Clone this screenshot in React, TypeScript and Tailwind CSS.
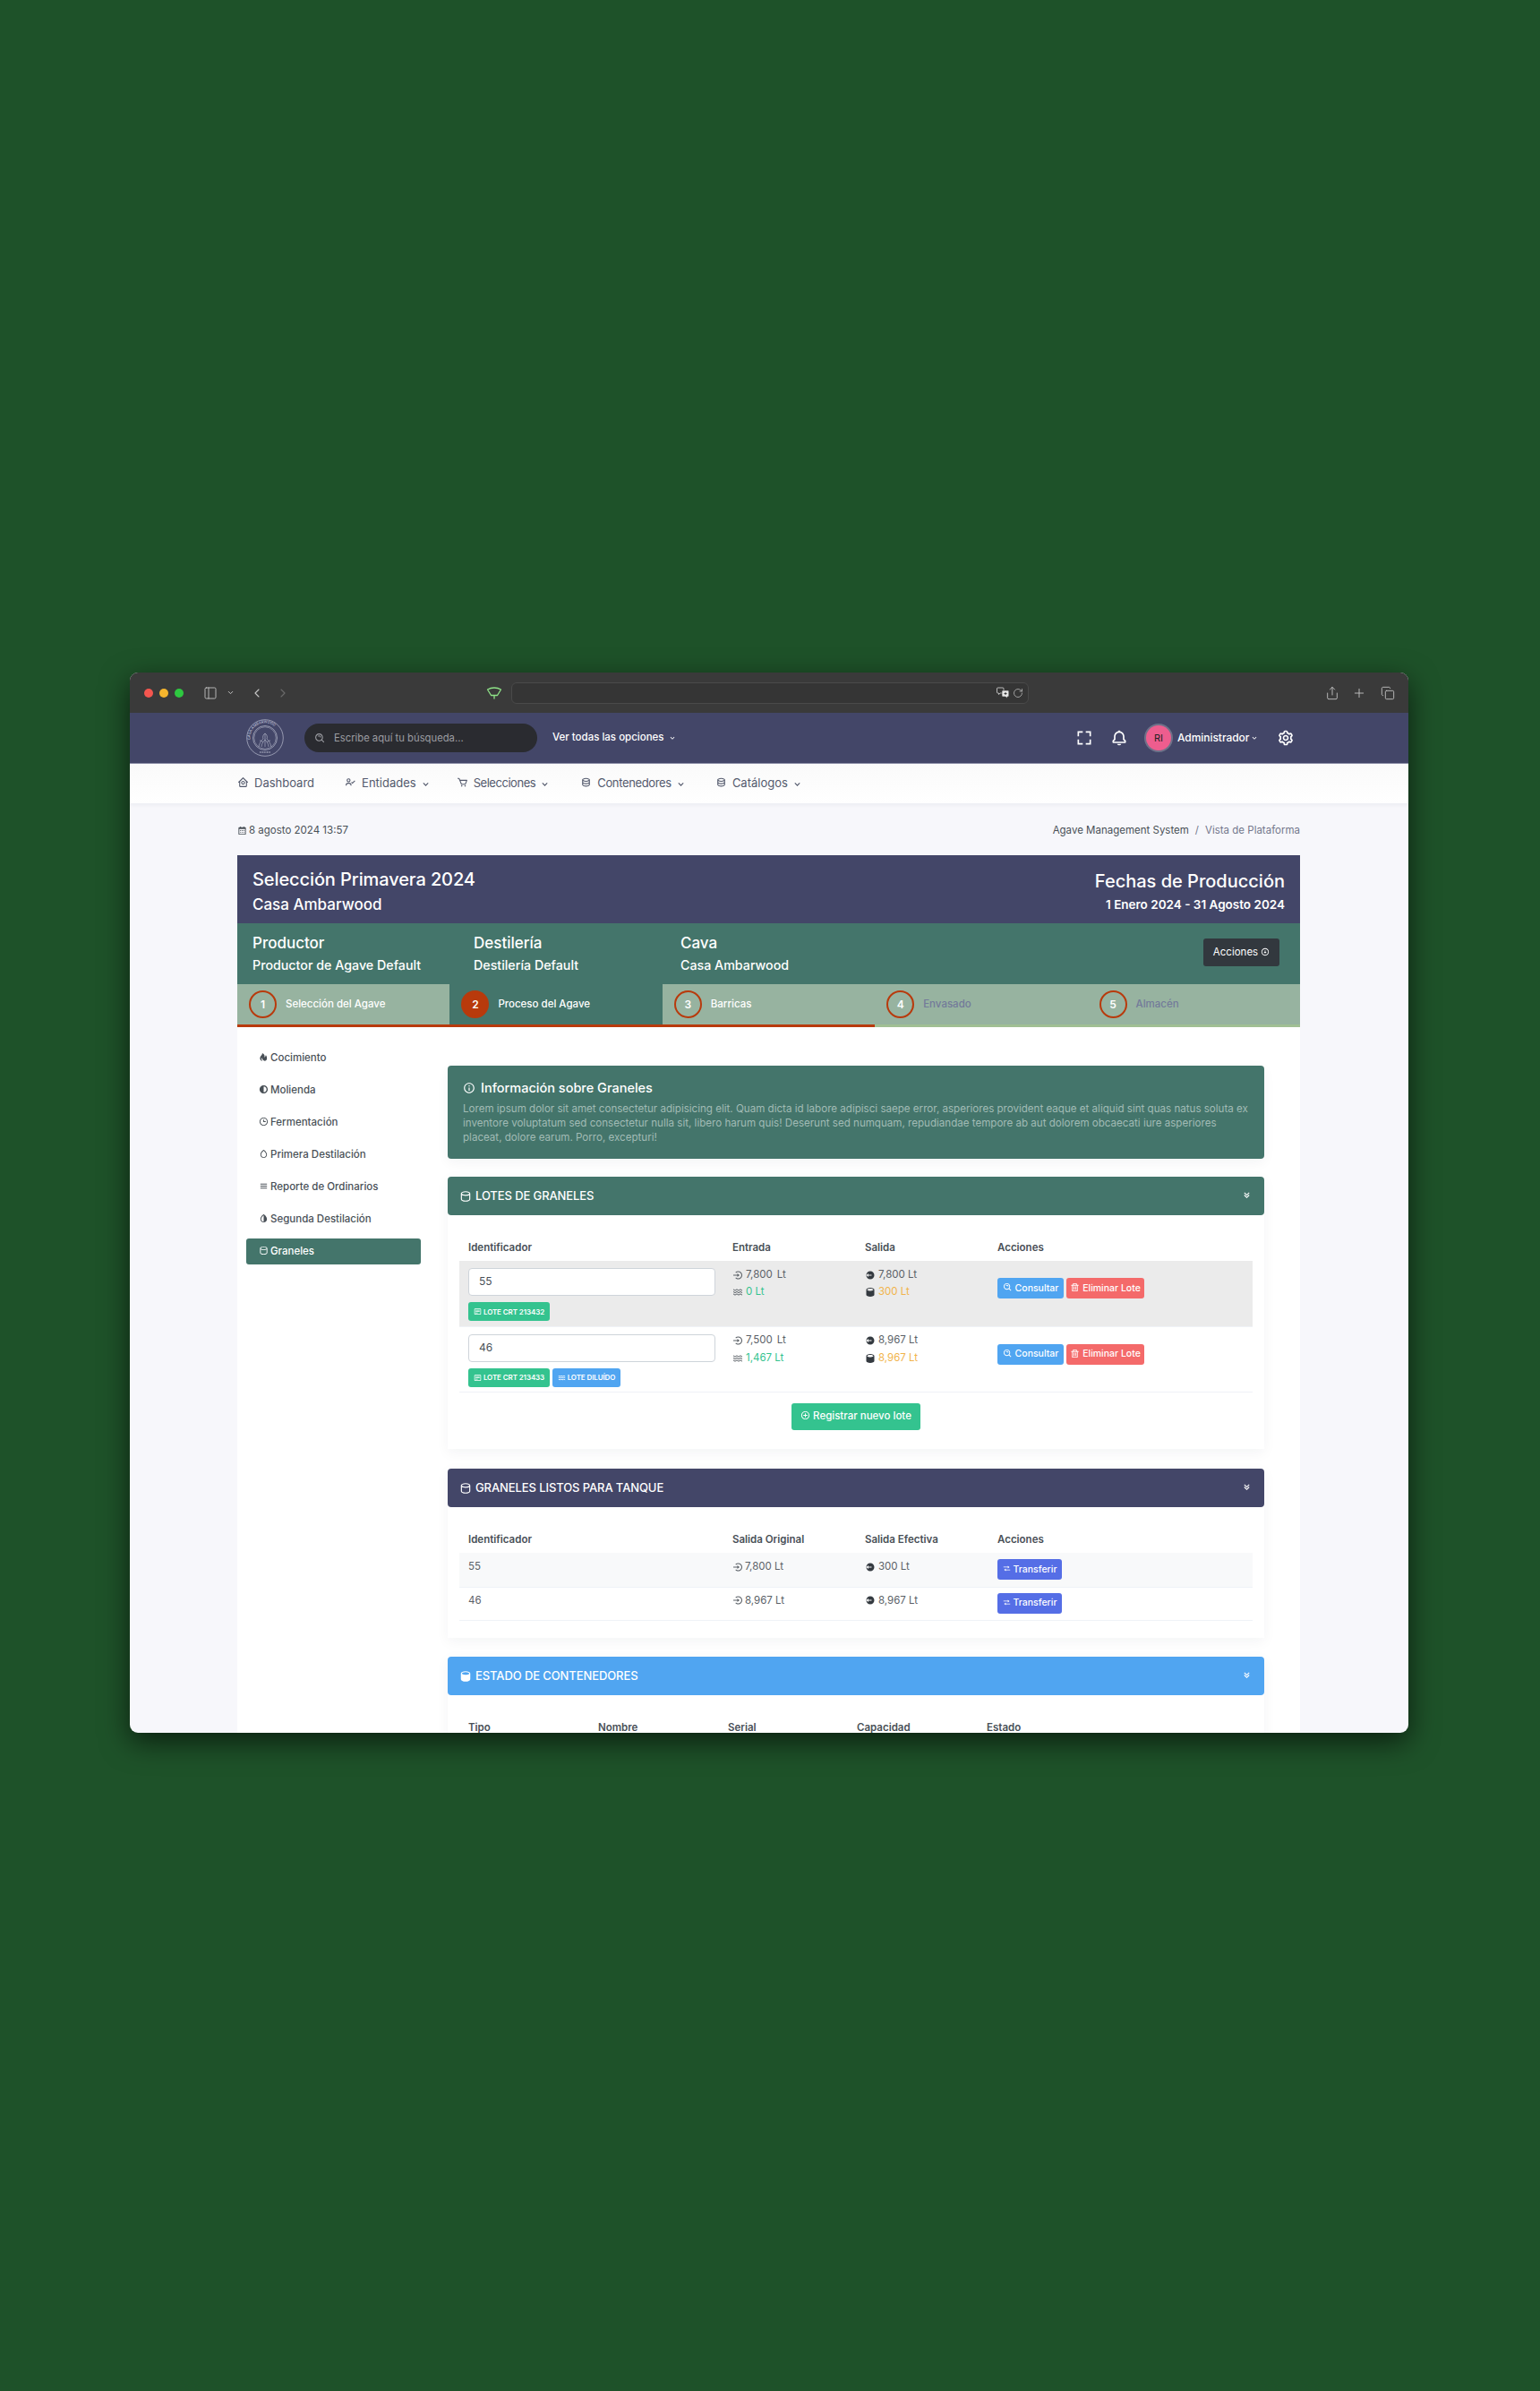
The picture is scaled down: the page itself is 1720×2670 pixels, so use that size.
import React from "react";
import {
  BiHomeCircle, BiUserCheck, BiCart, BiData, BiChevronDown, BiSearchAlt, BiFullscreen, BiBell, BiCog,
  BiCalendar, BiDownArrowCircle, BiSolidHot, BiSolidAdjust, BiTime, BiDroplet, BiMenu, BiSolidDropletHalf,
  BiCylinder, BiSolidCylinder, BiInfoCircle, BiChevronsDown, BiLogInCircle, BiSolidLogOutCircle, BiWater,
  BiDetail, BiTrash, BiTransfer, BiPlusCircle,
} from "react-icons/bi";
import { PanelLeft, ChevronDown, ChevronLeft, ChevronRight, Share, Plus, Copy, RotateCw } from "lucide-react";

const FONT = "[font-family:Inter,'Liberation_Sans',sans-serif]";

function Logo() {
  return (
    <svg width="42" height="42" viewBox="0 0 42 42" fill="none" stroke="#cfd2e0" strokeWidth="0.6">
      <circle cx="21" cy="21" r="20.3" />
      <circle cx="21" cy="21" r="13.5" />
      <circle cx="21" cy="21" r="12.2" strokeWidth="0.4" />
      <path id="logoArc" d="M4.5 23a16.5 16.5 0 0 1 33 -4" stroke="none" />
      <text fontSize="4" fill="#cfd2e0" stroke="none" fontFamily="Inter, sans-serif">
        <textPath href="#logoArc">CASA AMBARWOOD</textPath>
      </text>
      <path d="M14 31c1-5 3-7 5-9-1-2 0-5 2-6 2 1 3 4 2 6 2 2 4 5 5 9M17 31c0-3 2-6 4-8 2 2 4 5 4 8M21 16v15M15 24c2 0 3 1 4 2M27 24c-2 0-3 1-4 2" strokeWidth="0.5" />
      <path d="M15 37h12" strokeWidth="1.2" strokeDasharray="1 0.6" />
    </svg>
  );
}

function NavItem({ icon, label, chevron = true, ml, track = "" }: { icon: React.ReactNode; label: string; chevron?: boolean; ml: string; track?: string }) {
  return (
    <div className={`flex items-center text-[13px] text-[#545a6d] ${ml}`}>
      <span className="w-[19px] -translate-y-[2px]">{icon}</span>
      <span className={track}>{label}</span>
      {chevron && <BiChevronDown size={13} className="ml-[4px]" />}
    </div>
  );
}

function Step({ n, label, state }: { n: number; label: string; state: "done" | "active" | "todo" | "muted" }) {
  const active = state === "active";
  const muted = state === "muted";
  return (
    <div className={`flex h-[48px] w-[237.4px] items-center pl-[13px] border-b-[3px] ${active ? "bg-[#44756b]" : "bg-[#97b3a0]"} ${muted ? "border-[#a0bf94]" : "border-[#b83a0c]"}`}>
      <div className={`flex h-[31px] w-[31px] items-center justify-center rounded-full border-2 border-[#b83a0c] text-[12px] font-semibold text-white ${active ? "bg-[#b83a0c]" : ""}`}>{n}</div>
      <span className={`ml-[10px] text-[11.5px] font-medium ${muted ? "text-[#737a9a]" : "text-white"}`}>{label}</span>
    </div>
  );
}

function SideItem({ icon, label, active }: { icon: React.ReactNode; label: string; active?: boolean }) {
  return (
    <div className={`flex h-[29px] items-center rounded-[3px] pl-[14px] text-[11.5px] font-medium ${active ? "bg-[#44756b] text-white" : "text-[#495057]"}`}>
      <span className="flex w-[13px] -translate-y-[1px]">{icon}</span>
      {label}
    </div>
  );
}

function SectionHead({ icon, title, color }: { icon: React.ReactNode; title: string; color: string }) {
  return (
    <div className={`flex h-[43px] items-center rounded-[4px] pl-[13px] pr-[13px] text-white ${color}`}>
      <span className="mr-[4px] flex w-[14px]">{icon}</span>
      <span className="text-[13px] font-medium tracking-[-0.1px]">{title}</span>
      <BiChevronsDown size={13} className="ml-auto -translate-y-[1px]" />
    </div>
  );
}

function Badge({ icon, label, color, w }: { icon: React.ReactNode; label: string; color: string; w: string }) {
  return (
    <span className={`inline-flex h-[21px] items-center justify-center rounded-[3px] text-[8px] font-semibold tracking-[-0.1px] text-white ${color} ${w}`}>
      <span className="mr-[2px] flex">{icon}</span>
      {label}
    </span>
  );
}

function Btn({ icon, label, color, w }: { icon: React.ReactNode; label: string; color: string; w: string }) {
  return (
    <span className={`inline-flex h-[23px] items-center justify-center rounded-[3px] text-[10.5px] font-medium text-white ${color} ${w}`}>
      <span className="mr-[3px] flex -translate-y-[1px]">{icon}</span>
      {label}
    </span>
  );
}

function LoteRow({ id, badges, entrada, dil, dilColor, salida, env, shaded }: {
  id: string; badges: React.ReactNode; entrada: string; dil: string; dilColor: string; salida: string; env: string; shaded?: boolean;
}) {
  return (
    <tr className={`h-[73px] border-b border-[#eff2f7] align-top ${shaded ? "bg-[#ebebeb]" : ""}`}>
      <td className="px-[10px] pt-[8px]">
        <div className="flex h-[31px] w-[276px] items-center rounded-[4px] border border-[#ced4da] bg-white pb-[1px] pl-[11px] text-[12px] text-[#495057]">{id}</div>
        <div className="mt-[7px] flex gap-[3px]">{badges}</div>
      </td>
      <td className="px-[10px] pt-[6px] text-[11.5px] text-[#5b6167]">
        <div className="flex h-[19px] items-center"><BiLogInCircle size={12} className="mr-[3px]" />{entrada}<span className="ml-[5px]">Lt</span></div>
        <div className="flex h-[20px] items-center"><BiWater size={12} className="mr-[3px]" /><span className={dilColor}>{dil} Lt</span></div>
      </td>
      <td className="px-[10px] pt-[6px] text-[11.5px] text-[#5b6167]">
        <div className="flex h-[19px] items-center"><BiSolidLogOutCircle size={12} className="mr-[3px] text-[#343a40]" />{salida} Lt</div>
        <div className="flex h-[20px] items-center"><BiSolidCylinder size={12} className="mr-[3px] text-[#343a40]" /><span className="text-[#f1b44c]">{env} Lt</span></div>
      </td>
      <td className="px-[10px] pt-[19px]">
        <div className="flex gap-[3px]">
          <Btn icon={<BiSearchAlt size={11} />} label="Consultar" color="bg-[#50a5f1]" w="w-[74px]" />
          <Btn icon={<BiTrash size={11} />} label="Eliminar Lote" color="bg-[#f46a6a]" w="w-[87px]" />
        </div>
      </td>
    </tr>
  );
}

function ReadyRow({ id, orig, ef, shaded, h, pt }: { id: string; orig: string; ef: string; shaded?: boolean; h: string; pt: string }) {
  return (
    <tr className={`border-b border-[#eff2f7] align-top text-[11.5px] text-[#5b6167] ${h} ${shaded ? "bg-[#f8f9fa]" : ""}`}>
      <td className={`px-[10px] ${pt}`}>{id}</td>
      <td className={`px-[10px] ${pt}`}><span className="flex items-center"><BiLogInCircle size={12} className="mr-[2px]" />{orig} Lt</span></td>
      <td className={`px-[10px] ${pt}`}><span className="flex items-center"><BiSolidLogOutCircle size={12} className="mr-[3px] text-[#343a40]" />{ef} Lt</span></td>
      <td className={`px-[10px] ${pt}`}><Btn icon={<BiTransfer size={9} />} label="Transferir" color="bg-[#556ee6]" w="w-[72px]" /></td>
    </tr>
  );
}

export default function App() {
  return (
    <div className={`min-h-[2670px] w-full bg-[#1e5229] pt-[751px] ${FONT}`}>
      <div className="ml-[145px] h-[1184px] w-[1428px] overflow-hidden rounded-[9px] bg-[#f7f7fb] shadow-[0_10px_32px_rgba(0,0,0,0.62)]">
        {/* browser bar */}
        <div className="flex h-[45px] items-center bg-[#3a3a3a] pl-[16px] text-[#c8c8c8]">
          <span className="h-[10px] w-[10px] rounded-full bg-[#f4564f]" />
          <span className="ml-[7px] h-[10px] w-[10px] rounded-full bg-[#f5b52e]" />
          <span className="ml-[7px] h-[10px] w-[10px] rounded-full bg-[#2ec840]" />
          <PanelLeft size={16} strokeWidth={1.3} className="ml-[22px]" />
          <ChevronDown size={9} strokeWidth={2.5} className="ml-[10px]" />
          <ChevronLeft size={16} strokeWidth={1.6} className="ml-[17px]" />
          <ChevronRight size={16} strokeWidth={1.6} className="ml-[13px] text-[#6b6b6b]" />
          <svg width="18" height="18" viewBox="0 0 18 18" fill="none" stroke="#8fe388" strokeWidth="1.3" className="ml-[219px]">
            <path d="M1.500 5C4 3.500 6.500 3 9 3s5 .5 7.500 2L12.500 11.500h-7zM9 11.500V15" strokeLinejoin="round" strokeLinecap="round" />
          </svg>
          <div className="ml-[10px] flex h-[24px] w-[578px] items-center justify-end rounded-[6px] border border-[#4a4a4a] bg-[#353535] pr-[4px]">
            <svg width="14" height="13" viewBox="0 0 14 13" className="text-[#c8c8c8]">
              <path d="M1.500 1h5.500a1 1 0 0 1 1 1v4a1 1 0 0 1-1 1H4.200L2.500 8.500V7h-1a1 1 0 0 1-1-1V2a1 1 0 0 1 1-1z" fill="none" stroke="currentColor" strokeWidth="0.9" />
              <path d="M7 4h5.800a1 1 0 0 1 1 1v5a1 1 0 0 1-1 1H12v1.800L10 11H7a1 1 0 0 1-1-1V5a1 1 0 0 1 1-1z" fill="#e8e8e8" stroke="#3a3a3a" strokeWidth="0.6" />
              <path d="M8.500 7.500h3M10 6v3" stroke="#3a3a3a" strokeWidth="1" />
            </svg>
            <RotateCw size={12} strokeWidth={1.4} className="ml-[4px] mr-[1px]" />
          </div>
          <Share size={16} strokeWidth={1.3} className="ml-[331px]" />
          <Plus size={16} strokeWidth={1.3} className="ml-[14px]" />
          <Copy size={16} strokeWidth={1.3} className="ml-[16px]" />
        </div>

        {/* header */}
        <div className="h-[57px] border-b border-[#8d90a8] bg-[#434668] pl-[120px]">
          <div className="flex h-full w-[1187px] items-center pl-[10px] pr-[6px]">
            <Logo />
            <div className="ml-[23px] flex h-[32px] w-[260px] items-center rounded-full bg-[#2a2b30] pl-[11px] text-[11.25px] text-[#9c9da2]">
              <BiSearchAlt size={13} />
              <span className="ml-[9px]">Escribe aquí tu búsqueda...</span>
            </div>
            <span className="ml-[17px] text-[11.500px] font-medium text-white">Ver todas las opciones</span>
            <BiChevronDown size={10} className="ml-[4px] text-white" />
            <div className="ml-auto flex items-center text-white">
              <BiFullscreen size={20} />
              <BiBell size={20} className="ml-[19px]" />
              <div className="ml-[20px] flex h-[28px] w-[28px] items-center justify-center rounded-full bg-[#ee5d8e] text-[11px] text-[#232323] ring-[2px] ring-[#6e7189]">RI</div>
              <span className="ml-[7px] w-[77px] whitespace-nowrap text-[12px] font-medium tracking-[-0.05px]">Administrador</span>
              <BiChevronDown size={10} className="ml-[4px]" />
              <BiCog size={20} className="ml-[20px]" />
            </div>
          </div>
        </div>

        {/* nav */}
        <div className="flex h-[44px] items-center bg-gradient-to-b from-[#fafafa] to-white pl-[120px] shadow-[0_2px_4px_rgba(15,34,58,0.05)]">
          <NavItem ml="" icon={<BiHomeCircle size={13} />} label="Dashboard" chevron={false} />
          <NavItem ml="ml-[34px]" icon={<BiUserCheck size={13} />} label="Entidades" />
          <NavItem ml="ml-[28px]" icon={<BiCart size={13} />} label="Selecciones" track="tracking-[-0.45px]" />
          <NavItem ml="ml-[33px]" icon={<BiData size={13} />} label="Contenedores" track="tracking-[-0.35px]" />
          <NavItem ml="ml-[32px]" icon={<BiData size={13} />} label="Catálogos" />
        </div>

        <div className="ml-[120px] w-[1187px]">
          {/* crumbs */}
          <div className="flex h-[58px] items-center justify-between pt-[4px] text-[11.5px]">
            <span className="flex items-center text-[#495057]"><BiCalendar size={11} className="mr-[2px] -translate-y-[1px]" />8 agosto 2024 13:57</span>
            <span className="text-[#495057]">Agave Management System<span className="mx-[7px] text-[#74788d]">/</span><span className="text-[#74788d]">Vista de Plataforma</span></span>
          </div>

          {/* production header */}
          <div className="flex h-[76px] items-center justify-between bg-[#434668] pl-[17px] pr-[17px] pt-[5px] text-white">
            <div>
              <div className="text-[20px] font-medium leading-[28px] tracking-[-0.1px]">Selección Primavera 2024</div>
              <div className="text-[17px] font-medium leading-[28px]">Casa Ambarwood</div>
            </div>
            <div className="text-right">
              <div className="text-[20px] font-medium leading-[28px]">Fechas de Producción</div>
              <div className="text-[13.5px] font-semibold leading-[24px]">1 Enero 2024 - 31 Agosto 2024</div>
            </div>
          </div>
          <div className="flex h-[68px] items-center bg-[#44756b] pl-[17px] pr-[23px] pt-[1px] text-white">
            <div className="w-[247px]">
              <div className="text-[17px] font-medium leading-[24px]">Productor</div>
              <div className="text-[14.25px] font-medium leading-[26px]">Productor de Agave Default</div>
            </div>
            <div className="w-[231px]">
              <div className="text-[17px] font-medium leading-[24px]">Destilería</div>
              <div className="text-[14.25px] font-medium leading-[26px]">Destilería Default</div>
            </div>
            <div>
              <div className="text-[17px] font-medium leading-[24px]">Cava</div>
              <div className="text-[14.25px] font-medium leading-[26px]">Casa Ambarwood</div>
            </div>
            <div className="ml-auto flex h-[31px] w-[85px] -translate-y-[2px] items-center justify-center rounded-[3px] bg-[#32383e] text-[11.5px]">
              Acciones<BiDownArrowCircle size={10} className="ml-[3px] -translate-y-[1px]" />
            </div>
          </div>

          {/* steps */}
          <div className="flex">
            <Step n={1} label="Selección del Agave" state="done" />
            <Step n={2} label="Proceso del Agave" state="active" />
            <Step n={3} label="Barricas" state="todo" />
            <Step n={4} label="Envasado" state="muted" />
            <Step n={5} label="Almacén" state="muted" />
          </div>

          {/* body */}
          <div className="flex bg-white pl-[10px]">
            <aside className="flex w-[195px] flex-col gap-[7px] pt-[20px]">
              <SideItem icon={<BiSolidHot size={11} />} label="Cocimiento" />
              <SideItem icon={<BiSolidAdjust size={11} />} label="Molienda" />
              <SideItem icon={<BiTime size={11} />} label="Fermentación" />
              <SideItem icon={<BiDroplet size={11} />} label="Primera Destilación" />
              <SideItem icon={<BiMenu size={11} />} label="Reporte de Ordinarios" />
              <SideItem icon={<BiSolidDropletHalf size={11} />} label="Segunda Destilación" />
              <SideItem icon={<BiCylinder size={11} />} label="Graneles" active />
            </aside>

            <main className="ml-[30px] w-[912px] pt-[43px]">
              <div className="h-[104px] rounded-[4px] bg-[#44756b] px-[17px] pt-[14px] shadow-[0_4px_14px_rgba(18,38,63,0.05)]">
                <div className="flex items-center text-[14.5px] font-medium text-white">
                  <BiInfoCircle size={14} className="mr-[6px]" />Información sobre Graneles
                </div>
                <p className="mt-[4px] whitespace-nowrap text-[11.58px] leading-[16px] text-[#a1bbb5]">
                  Lorem ipsum dolor sit amet consectetur adipisicing elit. Quam dicta id labore adipisci saepe error, asperiores provident eaque et aliquid sint quas natus soluta ex<br />
                  inventore voluptatum sed consectetur nulla sit, libero harum quis! Deserunt sed numquam, repudiandae tempore ab aut dolorem obcaecati iure asperiores<br />
                  placeat, dolore earum. Porro, excepturi!
                </p>
              </div>

              <section className="mt-[20px] h-[304px] bg-white shadow-[0_4px_14px_rgba(18,38,63,0.05)]">
                <SectionHead icon={<BiCylinder size={14} />} title="LOTES DE GRANELES" color="bg-[#44756b]" />
                <div className="px-[13px]">
                  <table className="w-[886px] table-fixed border-collapse">
                    <colgroup><col className="w-[295px]" /><col className="w-[148px]" /><col className="w-[148px]" /><col className="w-[295px]" /></colgroup>
                    <thead>
                      <tr className="h-[51px] text-left align-bottom text-[11.500px] font-semibold text-[#495057]">
                        <th className="px-[10px] pb-[6px] font-semibold">Identificador</th>
                        <th className="px-[10px] pb-[6px] font-semibold">Entrada</th>
                        <th className="px-[10px] pb-[6px] font-semibold">Salida</th>
                        <th className="px-[10px] pb-[6px] font-semibold">Acciones</th>
                      </tr>
                    </thead>
                    <tbody>
                      <LoteRow shaded id="55" entrada="7,800" dil="0" dilColor="text-[#34c38f]" salida="7,800" env="300"
                        badges={<Badge w="w-[91px]" icon={<BiDetail size={9} />} label="LOTE CRT 213432" color="bg-[#34c38f]" />} />
                      <LoteRow id="46" entrada="7,500" dil="1,467" dilColor="text-[#34c38f]" salida="8,967" env="8,967"
                        badges={<>
                          <Badge w="w-[91px]" icon={<BiDetail size={9} />} label="LOTE CRT 213433" color="bg-[#34c38f]" />
                          <Badge w="w-[76px]" icon={<BiWater size={9} />} label="LOTE DILUÍDO" color="bg-[#50a5f1]" />
                        </>} />
                    </tbody>
                  </table>
                  <div className="mt-[12px] flex justify-center">
                    <span className="inline-flex h-[30px] w-[144px] items-center justify-center rounded-[3px] bg-[#34c38f] text-[11.5px] font-medium text-white">
                      <BiPlusCircle size={11} className="mr-[3px] -translate-y-[1px]" />Registrar nuevo lote
                    </span>
                  </div>
                </div>
              </section>

              <section className="mt-[22px] h-[189px] bg-white shadow-[0_4px_14px_rgba(18,38,63,0.05)]">
                <SectionHead icon={<BiCylinder size={14} />} title="GRANELES LISTOS PARA TANQUE" color="bg-[#434668]" />
                <div className="px-[13px]">
                  <table className="w-[886px] table-fixed border-collapse">
                    <colgroup><col className="w-[295px]" /><col className="w-[148px]" /><col className="w-[148px]" /><col className="w-[295px]" /></colgroup>
                    <thead>
                      <tr className="h-[51px] text-left align-bottom text-[11.500px] text-[#495057]">
                        <th className="px-[10px] pb-[6px] font-semibold">Identificador</th>
                        <th className="px-[10px] pb-[6px] font-semibold">Salida Original</th>
                        <th className="px-[10px] pb-[6px] font-semibold">Salida Efectiva</th>
                        <th className="px-[10px] pb-[6px] font-semibold">Acciones</th>
                      </tr>
                    </thead>
                    <tbody>
                      <ReadyRow shaded h="h-[38px]" pt="pt-[7px]" id="55" orig="7,800" ef="300" />
                      <ReadyRow h="h-[37px]" pt="pt-[6px]" id="46" orig="8,967" ef="8,967" />
                    </tbody>
                  </table>
                </div>
              </section>

              <section className="mt-[21px] bg-white shadow-[0_4px_14px_rgba(18,38,63,0.05)]">
                <SectionHead icon={<BiSolidCylinder size={14} />} title="ESTADO DE CONTENEDORES" color="bg-[#50a5f1]" />
                <div className="px-[13px]">
                  <table className="w-[886px] table-fixed border-collapse">
                    <colgroup><col className="w-[145px]" /><col className="w-[145px]" /><col className="w-[144px]" /><col className="w-[145px]" /><col className="w-[307px]" /></colgroup>
                    <thead>
                      <tr className="h-[51px] text-left align-bottom text-[11.500px] text-[#495057]">
                        <th className="px-[10px] pb-[6px] font-semibold">Tipo</th>
                        <th className="px-[10px] pb-[6px] font-semibold">Nombre</th>
                        <th className="px-[10px] pb-[6px] font-semibold">Serial</th>
                        <th className="px-[10px] pb-[6px] font-semibold">Capacidad</th>
                        <th className="px-[10px] pb-[6px] font-semibold">Estado</th>
                      </tr>
                    </thead>
                  </table>
                  <div className="h-[200px]" />
                </div>
              </section>
            </main>
          </div>
        </div>
      </div>
    </div>
  );
}
